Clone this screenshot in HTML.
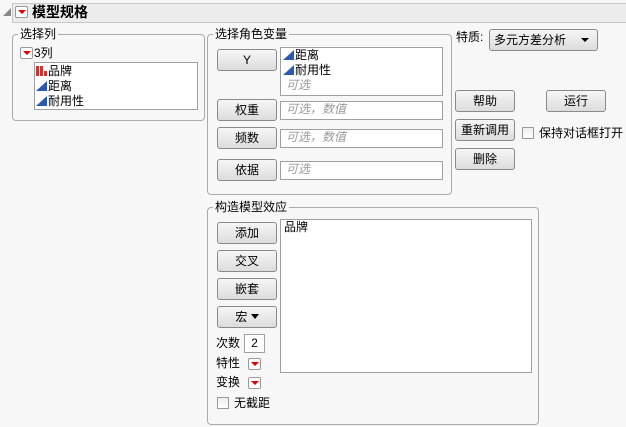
<!DOCTYPE html>
<html><head><meta charset="utf-8"><style>
*{box-sizing:border-box;margin:0;padding:0}
body{width:626px;height:427px;background:#f7f7f7;font-family:"Liberation Sans","Noto Sans CJK SC",sans-serif;font-size:12px;color:#000;position:relative;overflow:hidden}
.a{position:absolute;white-space:nowrap;line-height:15px}
.grp{position:absolute;border:1px solid #aaa;border-radius:4px}
.lg{position:absolute;background:#f7f7f7;padding:0 2px;line-height:14px}
.btn{position:absolute;width:60px;height:22px;border:1px solid #8a8a8a;border-radius:3px;background:linear-gradient(#f6f6f6,#dcdcdc);text-align:center;line-height:20px}
.box{position:absolute;background:#fff;border:1px solid #a0a0a0}
.ph{color:#999;font-style:italic}
.rb{position:absolute;width:13px;height:12px;border:1px solid #999;border-radius:2px;background:#fff}
.rb:after{content:"";position:absolute;left:2px;top:3px;border-left:4px solid transparent;border-right:4px solid transparent;border-top:4px solid #d00}
.tri{display:inline-block;width:0;height:0;border-left:11px solid transparent;border-bottom:10px solid #2a5ab0;vertical-align:-1px;margin-right:1px}
.cb{position:absolute;width:12px;height:12px;border:1px solid #999;background:linear-gradient(#eee,#fff)}
</style></head><body>
<div style="position:absolute;left:3px;top:8px;width:0;height:0;border-left:8px solid transparent;border-bottom:8px solid #888"></div>
<div style="position:absolute;left:12px;top:3px;width:620px;height:20px;background:#ececec;border:1px solid #c8c8c8"></div>
<div class="rb" style="left:15px;top:6px"></div>
<div class="a" style="left:32px;top:4px;font-size:14px;font-weight:bold;line-height:17px">模型规格</div>

<div class="grp" style="left:12px;top:34px;width:193px;height:87px"></div>
<div class="lg" style="left:18px;top:27px">选择列</div>
<div class="rb" style="left:20px;top:47px"></div>
<div class="a" style="left:34px;top:46px">3列</div>
<div class="box" style="left:34px;top:62px;width:164px;height:48px"></div>
<div class="a" style="left:36px;top:64px"><span style="display:inline-block;width:11px;height:10px;vertical-align:-1px;margin-right:1px;background:linear-gradient(90deg,#c33 0 3px,transparent 3px 4px,#c33 4px 7px,transparent 7px 8px,#c33 8px);clip-path:polygon(0 0,3px 0,3px 30%,4px 30%,4px 0,7px 0,7px 60%,8px 60%,8px 50%,100% 50%,100% 100%,0 100%)"></span>品牌</div>
<div class="a" style="left:36px;top:79px"><span class="tri"></span>距离</div>
<div class="a" style="left:36px;top:94px"><span class="tri"></span>耐用性</div>

<div class="grp" style="left:207px;top:34px;width:245px;height:161px"></div>
<div class="lg" style="left:213px;top:27px">选择角色变量</div>
<div class="btn" style="left:217px;top:49px">Y</div>
<div class="box" style="left:280px;top:47px;width:163px;height:49px"></div>
<div class="a" style="left:283px;top:48px"><span class="tri"></span>距离</div>
<div class="a" style="left:283px;top:63px"><span class="tri"></span>耐用性</div>
<div class="a ph" style="left:286px;top:78px">可选</div>
<div class="btn" style="left:217px;top:99px">权重</div>
<div class="box" style="left:280px;top:101px;width:163px;height:19px"></div>
<div class="a ph" style="left:286px;top:102px">可选，数值</div>
<div class="btn" style="left:217px;top:127px">频数</div>
<div class="box" style="left:280px;top:129px;width:163px;height:19px"></div>
<div class="a ph" style="left:286px;top:130px">可选，数值</div>
<div class="btn" style="left:217px;top:159px">依据</div>
<div class="box" style="left:280px;top:161px;width:163px;height:19px"></div>
<div class="a ph" style="left:286px;top:162px">可选</div>

<div class="a" style="left:456px;top:30px">特质:</div>
<div class="btn" style="left:489px;top:29px;width:109px;text-align:left;padding-left:4px">多元方差分析<span style="position:absolute;right:8px;top:8px;border-left:4px solid transparent;border-right:4px solid transparent;border-top:4px solid #000"></span></div>
<div class="btn" style="left:455px;top:90px">帮助</div>
<div class="btn" style="left:546px;top:90px">运行</div>
<div class="btn" style="left:455px;top:119px">重新调用</div>
<div class="cb" style="left:522px;top:127px"></div>
<div class="a" style="left:539px;top:126px">保持对话框打开</div>
<div class="btn" style="left:455px;top:148px">删除</div>

<div class="grp" style="left:207px;top:207px;width:332px;height:218px"></div>
<div class="lg" style="left:213px;top:200px">构造模型效应</div>
<div class="btn" style="left:217px;top:222px">添加</div>
<div class="btn" style="left:217px;top:250px">交叉</div>
<div class="btn" style="left:217px;top:278px">嵌套</div>
<div class="btn" style="left:217px;top:306px">宏 <span style="display:inline-block;border-left:4px solid transparent;border-right:4px solid transparent;border-top:5px solid #000;vertical-align:2px"></span></div>
<div class="box" style="left:280px;top:219px;width:252px;height:154px"></div>
<div class="a" style="left:284px;top:220px">品牌</div>
<div class="a" style="left:216px;top:336px">次数</div>
<div class="box" style="left:244px;top:334px;width:21px;height:19px;text-align:center;line-height:17px">2</div>
<div class="a" style="left:216px;top:356px">特性</div>
<div class="rb" style="left:248px;top:358px"></div>
<div class="a" style="left:216px;top:375px">变换</div>
<div class="rb" style="left:248px;top:377px"></div>
<div class="cb" style="left:217px;top:397px"></div>
<div class="a" style="left:234px;top:396px">无截距</div>
</body></html>
